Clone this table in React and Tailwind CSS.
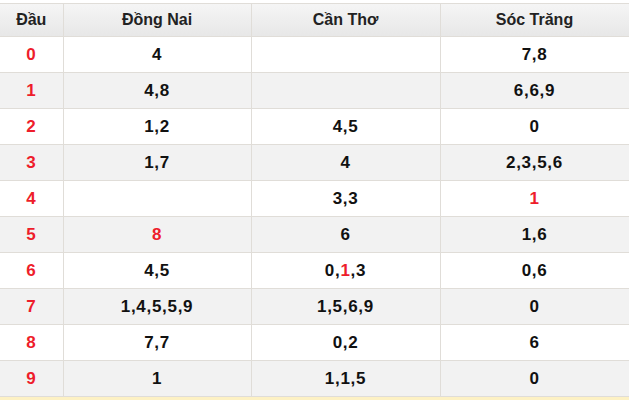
import React from "react";

const rows = [
  { d: "0", a: "4", b: "", c: "7,8" },
  { d: "1", a: "4,8", b: "", c: "6,6,9" },
  { d: "2", a: "1,2", b: "4,5", c: "0" },
  { d: "3", a: "1,7", b: "4", c: "2,3,5,6" },
  { d: "4", a: "", b: "3,3", c: <span className="text-[#ee1d2b]">1</span> },
  { d: "5", a: <span className="text-[#ee1d2b]">8</span>, b: "6", c: "1,6" },
  {
    d: "6",
    a: "4,5",
    b: (
      <>
        0,<span className="text-[#ee1d2b]">1</span>,3
      </>
    ),
    c: "0,6",
  },
  { d: "7", a: "1,4,5,5,9", b: "1,5,6,9", c: "0" },
  { d: "8", a: "7,7", b: "0,2", c: "6" },
  { d: "9", a: "1", b: "1,1,5", c: "0" },
];

const App = () => {
  return (
    <div className="w-[629px] h-[400px] bg-white pt-[3px] font-['Liberation_Sans',Arial,sans-serif] overflow-hidden">
      <table className="w-[629px] table-fixed border-collapse font-bold text-[#111]">
        <colgroup>
          <col className="w-[63px]" />
          <col className="w-[188px]" />
          <col className="w-[189px]" />
          <col className="w-[189px]" />
        </colgroup>
        <thead>
          <tr className="h-[33px] bg-gradient-to-b from-[#f5f5f5] to-[#e7e7e7] text-[16px] text-[#222]">
            <th className="border border-[#e0ddd8] border-l-0">Đầu</th>
            <th className="border border-[#e0ddd8]">Đồng Nai</th>
            <th className="border border-[#e0ddd8]">Cần Thơ</th>
            <th className="border border-[#e0ddd8]">Sóc Trăng</th>
          </tr>
        </thead>
        <tbody className="text-[17px] tracking-[0.7px]">
          {rows.map((r, i) => (
            <tr
              key={r.d}
              className={i % 2 === 1 ? "h-[36px] bg-[#f2f2f2]" : "h-[36px] bg-white"}
            >
              <td className="border border-[#e0ddd8] border-l-0 text-center text-[#ee1d2b]">
                {r.d}
              </td>
              <td className="border border-[#e0ddd8] text-center">{r.a}</td>
              <td className="border border-[#e0ddd8] text-center">{r.b}</td>
              <td className="border border-[#e0ddd8] text-center">{r.c}</td>
            </tr>
          ))}
        </tbody>
      </table>
      <div className="h-[10px] bg-[#fdf1c4]"></div>
    </div>
  );
};

export default App;
